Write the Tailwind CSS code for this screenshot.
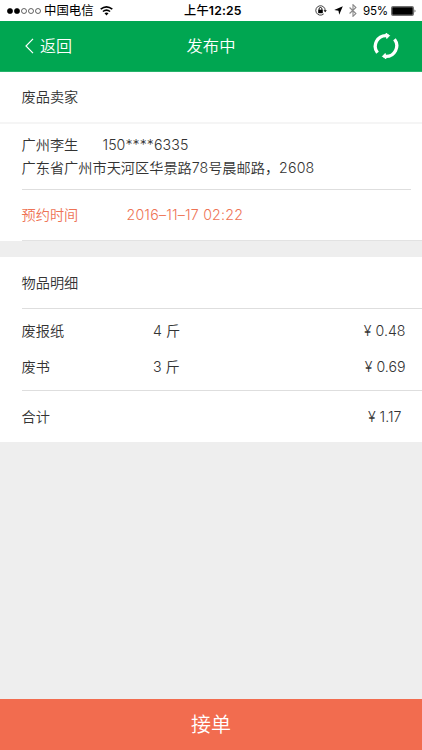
<!DOCTYPE html>
<html lang="zh-CN">
<head>
<meta charset="utf-8">
<title>发布中</title>
<script src="https://cdn.jsdelivr.net/npm/@tailwindcss/browser@4"></script>
</head>
<body class="w-[422px] h-[750px] overflow-hidden flex flex-col bg-[#eeeeee] text-[#333333] text-[14.2px] leading-[22px] font-[Inter,'Noto_Sans_CJK_SC',sans-serif] font-[350] whitespace-nowrap">
<div class="h-[21px] shrink-0 bg-white flex items-center text-black text-[11px] leading-[20px] pl-[7px] pr-[5px] font-normal">
  <svg class="w-[35px] h-[8px] mr-[2px]" viewBox="0 0 35 8"><g stroke="#000" stroke-width=".6"><circle cx="3" cy="4" r="2.6"/><circle cx="10" cy="4" r="2.6"/><g fill="none"><circle cx="17" cy="4" r="2.5"/><circle cx="24" cy="4" r="2.5"/><circle cx="31" cy="4" r="2.5"/></g></g></svg>
  <span class="text-[12.4px] w-[56px]">中国电信</span>
  <svg class="w-[13px] h-[10px]" viewBox="0 0 13 10" fill="none" stroke="#000" stroke-width="1.6"><path d="M.7 3.2Q6.5-1.5 12.3 3.2M2.9 5.5Q6.5 2.6 10.1 5.5"/><path d="M4.5 7.3Q6.5 5.8 8.5 7.3L6.5 9.5Z" fill="#000" stroke="none"/></svg>
  <div class="w-[71px]"></div>
  <span class="text-[12.2px] font-medium w-[60px] tracking-[0.2px]">上午<span class="font-semibold">12:25</span></span>
  <div class="flex-1"></div>
  <svg class="w-[12px] h-[11px] mr-[7px]" viewBox="0 0 12 11"><path d="M10.2 5.5a4.7 4.7 0 1 0-1.5 3.4" fill="none" stroke="#111" stroke-width=".8"/><path d="M8.5 5.2h3.3L10.2 7.3Z"/><rect x="3.2" y="4.7" width="4.6" height="3.5"/><path d="M4.1 5V3.9a1.4 1.4 0 0 1 2.8 0V5" fill="none" stroke="#000" stroke-width=".9"/></svg>
  <svg class="w-[9px] h-[9px] mr-[6px]" viewBox="0 0 9 9"><path d="M8.8.2 5.2 8.7 4.5 4.7.2 4.1Z"/></svg>
  <svg class="w-[8px] h-[13px] mr-[6px]" viewBox="0 0 8 13" fill="none" stroke="#888" stroke-width="1.1"><path d="m.6 3.5 6.3 6L4 12.3V.7l2.9 2.8-6.3 6"/></svg>
  <span class="text-[11.6px] w-[26px] tracking-[-0.2px]">95%</span>
  <svg class="w-[26px] h-[10px] ml-[2px]" viewBox="0 0 26 10"><rect x=".5" y=".5" width="22" height="9" rx="1" fill="none" stroke="#333" stroke-width=".7"/><rect x="1.2" y="1.2" width="20.6" height="7.6"/><path d="M23.7 3.3q1.5 1.7 0 3.4Z"/></svg>
</div>
<header class="h-[51px] shrink-0 bg-[#00a651] text-white grid grid-cols-3 items-center text-[16px] border-b border-[#26b36b]">
  <div class="flex items-center pl-[25px]">
    <svg class="w-[9px] h-[16px] mr-[6px]" viewBox="0 0 9 16" fill="none" stroke="#fff" stroke-width="1.2"><path d="M8 .8 1 8l7 7.2"/></svg>
    <span>返回</span>
  </div>
  <span class="text-center text-[16.3px]">发布中</span>
  <svg class="w-[26px] h-[28px] justify-self-end mr-[23.5px]" viewBox="0 0 26 28" fill="none" stroke="#fff" stroke-width="3.3"><path d="M4.5 20.8A10.7 10.7 0 0 1 13.5 3.6M21.5 7.2A10.7 10.7 0 0 1 12.5 24.4"/><path d="M13 1.3 16.6 3.6 13.8 6.5ZM13 26.7 9.4 24.4 12.2 21.5Z" fill="#fff" stroke-width="1" stroke-linejoin="round"/></svg>
</header>
<section class="bg-white h-[169px] shrink-0 flex flex-col">
  <div class="h-[52px] border-b-2 border-[#f5f5f5] pl-[21.5px] flex items-center">废品卖家</div>
  <div class="h-[66px] ml-[21.5px] mr-[11px] border-b border-[#dedede] pt-[10px]">
    <div class="flex"><span class="w-[81px]">广州李生</span><span class="tracking-[0.05px]">150****6335</span></div>
    <div class="leading-[23px]">广东省广州市天河区华景路78号晨邮路，<span class="tracking-[0.15px]">2608</span></div>
  </div>
  <div class="h-[51px] ml-[21.5px] border-b border-[#e2e2e2] flex items-center text-[#ee7355]"><span class="w-[105px]">预约时间</span><span class="tracking-[0.2px]">2016–11–17 02:22</span></div>
</section>
<section class="bg-white h-[185px] shrink-0 mt-[16px] pl-[21.5px] flex flex-col">
  <div class="h-[52px] border-b border-[#dedede] flex items-center">物品明细</div>
  <div class="h-[82px] border-b border-[#dedede] pt-[4px]">
    <div class="h-[36px] flex items-center pr-[16.5px]"><span class="w-[131.5px]">废报纸</span><span>4 斤</span><span class="ml-auto">¥ 0.48</span></div>
    <div class="h-[36px] flex items-center pr-[16.5px]"><span class="w-[131.5px]">废书</span><span>3 斤</span><span class="ml-auto">¥ 0.69</span></div>
  </div>
  <div class="flex-1 flex items-center pr-[20.5px]"><span>合计</span><span class="ml-auto">¥ 1.17</span></div>
</section>
<button class="mt-auto h-[51px] shrink-0 bg-[#f26c4f] text-white text-[20px]">接单</button>
</body>
</html>
